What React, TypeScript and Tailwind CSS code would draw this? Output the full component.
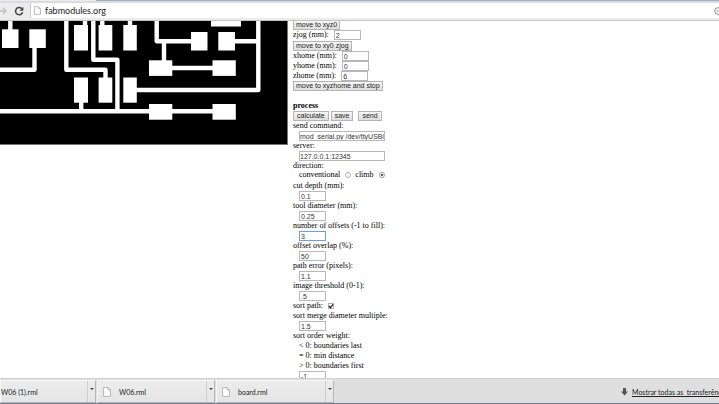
import { useState } from "react";
import type { ReactNode } from "react";

type FieldProps = { id: string; label: string; value: string; wide?: boolean };

function NumberBox({ id, value, wide = false }: { id: string; value: string; wide?: boolean }) {
  const [text, setText] = useState(value);
  return (
    <input
      id={id}
      type="text"
      value={text}
      onChange={(e) => setText(e.target.value)}
      className={`block h-[10px] border bg-white font-['Liberation_Sans',Arial,sans-serif] text-[7px] leading-[8px] text-[#333] outline-none ${
        wide ? "w-[86px]" : "w-[27px] pl-px"
      } ${id === "offsets" ? "border-[#6d9eeb]" : "border-[#b8b8b8]"}`}
    />
  );
}

function InlineField({ id, label, value }: FieldProps) {
  return (
    <div className="flex h-[10px] items-center gap-[5px]">
      <label htmlFor={id}>{label}</label>
      <NumberBox id={id} value={value} />
    </div>
  );
}

function StackedField({ id, label, value, wide }: FieldProps) {
  return (
    <div>
      <label htmlFor={id} className="block h-[10px]">
        {label}
      </label>
      <div className="pl-[6px]">
        <NumberBox id={id} value={value} wide={wide} />
      </div>
    </div>
  );
}

function PushButton({ children, roomy = false }: { children: ReactNode; roomy?: boolean }) {
  return (
    <button
      type="button"
      className={`block h-[10px] border border-[#b4b4b4] bg-linear-to-b from-[#f6f6f6] to-[#dedede] font-['Liberation_Sans',Arial,sans-serif] text-[7px] leading-[8px] text-[#222] ${
        roomy ? "px-[3px]" : "px-[2px]"
      }`}
    >
      {children}
    </button>
  );
}

function Radio({ id, checked, onPick }: { id: string; checked: boolean; onPick: () => void }) {
  return (
    <input
      id={id}
      type="radio"
      name="direction"
      checked={checked}
      onChange={onPick}
      className="size-[6px] appearance-none rounded-full border border-[#adadad] bg-[#eeeeee] bg-clip-content p-px checked:border-[#999] checked:bg-[#222]"
    />
  );
}

function Board() {
  const pads = [
    [2, 29.3, 16.5, 18.7],
    [29.3, 29.3, 16.5, 18.7],
    [74, 25, 14, 25.5],
    [98.6, 25, 13.7, 25.5],
    [123.3, 25, 13.5, 25.5],
    [74, 77.5, 14, 25.2],
    [98.6, 77.5, 13.7, 25.2],
    [123.3, 77.5, 13.5, 25.2],
    [191, 32, 16.5, 18.5],
    [218.3, 32, 16.7, 18.5],
    [211, 21, 30, 5.5],
    [149, 60.3, 23.3, 15.6],
    [212.5, 60.3, 23.3, 15.6],
    [149, 104, 23.3, 15.7],
    [212.5, 104, 23.3, 15.7],
  ];
  return (
    <svg
      viewBox="0 21 288 124"
      className="block h-[124px] w-[288px] shrink-0 bg-black"
      role="img"
      aria-label="board traces"
    >
      <g fill="#fff">
        {pads.map(([x, y, w, h]) => (
          <rect key={`${x}-${y}`} x={x} y={y} width={w} height={h} />
        ))}
      </g>
      <g fill="none" stroke="#fff" strokeWidth="4.4" strokeLinejoin="round">
        <path d="M10.3 21V30M34.5 47V69.7H0" />
        <path d="M66.3 21V69.7H105.5V79" />
        <path d="M85 21V26M102.3 21V26M130 21V26" />
        <path d="M93.3 21V59.8H117.4V111.3" />
        <path d="M81.2 102V111.3M0 111.3H213" />
        <path d="M136 90H258.3V21M235 41.3H258.3" />
        <path d="M156.7 21V41.3H191M164 41.3V61" />
        <path d="M172 68H213" />
      </g>
      <path d="M0 144.5H288M287.5 21V145" stroke="#777" fill="none" />
    </svg>
  );
}

function PageIcon({ className }: { className: string }) {
  return (
    <svg viewBox="0 0 8 10" className={className} aria-hidden="true">
      <path d="M.6.6H5L7.4 3V9.4H.6Z" fill="#fff" stroke="#a3a3a3" strokeWidth=".8" />
      <path d="M5 .6V3H7.4" fill="none" stroke="#a3a3a3" strokeWidth=".7" />
    </svg>
  );
}

function DownloadItem({ name, className, first = false }: { name: string; className: string; first?: boolean }) {
  return (
    <div
      className={`flex h-[23px] shrink-0 border border-t-[#f6f6f6] border-r-[#b5b5b5] border-b-[#b5b5b5] border-l-[#f6f6f6] bg-linear-to-b from-[#ececec] to-[#e5e5e5] ${className}`}
    >
      <button type="button" className={`flex min-w-0 flex-1 items-center ${first ? "" : "gap-[8px] pl-[5px]"}`}>
        {!first && <PageIcon className="h-[10px] w-[8px]" />}
        <span className="whitespace-nowrap">{name}</span>
      </button>
      <button
        type="button"
        aria-label={`Options for ${name}`}
        className="flex w-[8px] justify-center border-l border-[#cecece] pt-[7px]"
      >
        <svg viewBox="0 0 4 2" className="h-[2px] w-[4px]" aria-hidden="true">
          <path d="M0 0H4L2 2Z" fill="#444" />
        </svg>
      </button>
    </div>
  );
}

export default function App() {
  const [direction, setDirection] = useState("climb");
  const [sortPath, setSortPath] = useState(true);

  return (
    <div className="flex h-screen flex-col overflow-hidden bg-white">
      <header className="flex h-[21px] shrink-0 flex-col border-b border-[#c4c4c4] bg-[#ececec]">
        <div className="flex h-[3px] shrink-0 flex-col">
          <div className="ml-[96px] h-px bg-[#9daec0]" />
          <div className="h-[2px] bg-[#dddbe1]" />
        </div>
        <div className="flex h-[15px] items-center">
          <button type="button" aria-label="Forward" className="w-[7px] shrink-0">
            <svg viewBox="0 0 7 8" className="h-[8px] w-[7px]" aria-hidden="true">
              <path d="M0 4H6M3 1L6 4L3 7" fill="none" stroke="#bdbdbd" strokeWidth="1.3" />
            </svg>
          </button>
          <button type="button" aria-label="Reload" className="ml-[7px] w-[10px] shrink-0">
            <svg viewBox="0 0 10 10" className="size-[10px]" aria-hidden="true">
              <path d="M7.6 2.5A3.6 3.6 0 1 0 8.6 6.2" fill="none" stroke="#444" strokeWidth="1.5" />
              <path d="M9.4.7V4.7H5.4Z" fill="#444" />
            </svg>
          </button>
          <div className="ml-[6px] flex h-[15px] min-w-0 flex-1 items-center rounded-l-[2px] border-l border-[#c8c8c8] bg-white pl-[3px]">
            <PageIcon className="h-[9px] w-[7px] shrink-0" />
            <input
              type="text"
              aria-label="Address"
              defaultValue="fabmodules.org"
              className="ml-[4px] h-[13px] min-w-0 flex-1 bg-transparent font-[Lato,'Open_Sans',sans-serif] text-[9px] leading-[13px] text-[#222] outline-none"
            />
            <div className="w-[5px] shrink-0 overflow-hidden">
              <svg viewBox="0 0 8 8" className="size-[8px]" aria-hidden="true">
                <circle cx="4" cy="4" r="3.3" fill="none" stroke="#8c8c8c" />
                <path d="M2.5 4H8" stroke="#8c8c8c" />
              </svg>
            </div>
          </div>
        </div>
      </header>

      <main className="flex min-h-0 flex-1 items-start overflow-hidden">
        <Board />
        <form className="-mt-px min-w-0 flex-1 pl-[5px] font-['Liberation_Serif','Times_New_Roman',serif] text-[8px] leading-[10px] whitespace-nowrap text-black">
          <PushButton>move to xyz0</PushButton>
          <InlineField id="zjog" label="zjog (mm):" value="2" />
          <div className="pt-px">
            <PushButton>move to xy0 zjog</PushButton>
          </div>
          <InlineField id="xhome" label="xhome (mm):" value="0" />
          <InlineField id="yhome" label="yhome (mm):" value="0" />
          <InlineField id="zhome" label="zhome (mm):" value="6" />
          <PushButton>move to xyzhome and stop</PushButton>

          <h2 className="pt-[10px] font-bold">process</h2>
          <div className="flex">
            <PushButton roomy>calculate</PushButton>
            <div className="pr-[5px] pl-[2px]">
              <PushButton roomy>save</PushButton>
            </div>
            <PushButton roomy>send</PushButton>
          </div>
          <StackedField id="command" label="send command:" value="mod_serial.py /dev/ttyUSB0" wide />
          <StackedField id="server" label="server:" value="127.0.0.1:12345" wide />
          <fieldset>
            <legend className="block h-[9px]">direction:</legend>
            <div className="flex h-[11px] items-center pb-px pl-[6px]">
              <label htmlFor="conventional">conventional</label>
              <div className="flex pr-[4px] pl-[5px]">
                <Radio id="conventional" checked={direction === "conventional"} onPick={() => setDirection("conventional")} />
              </div>
              <label htmlFor="climb">climb</label>
              <div className="flex pl-[5px]">
                <Radio id="climb" checked={direction === "climb"} onPick={() => setDirection("climb")} />
              </div>
            </div>
          </fieldset>
          <StackedField id="depth" label="cut depth (mm):" value="0.1" />
          <StackedField id="diameter" label="tool diameter (mm):" value="0.25" />
          <StackedField id="offsets" label="number of offsets (-1 to fill):" value="3" />
          <StackedField id="overlap" label="offset overlap (%):" value="50" />
          <StackedField id="error" label="path error (pixels):" value="1.1" />
          <StackedField id="threshold" label="image threshold (0-1):" value=".5" />
          <div className="flex h-[10px] items-center gap-[5px]">
            <label htmlFor="sort">sort path:</label>
            <span className="relative flex">
              <input
                id="sort"
                type="checkbox"
                checked={sortPath}
                onChange={(e) => setSortPath(e.target.checked)}
                className="size-[6px] appearance-none border border-[#b0b0b0] bg-white"
              />
              {sortPath && (
                <svg viewBox="0 0 6 6" className="pointer-events-none absolute inset-0 size-[6px]" aria-hidden="true">
                  <path d="M1 3L2.5 4.7L5.2 1" fill="none" stroke="#222" strokeWidth="1.2" />
                </svg>
              )}
            </span>
          </div>
          <StackedField id="merge" label="sort merge diameter multiple:" value="1.5" />
          <label htmlFor="weight" className="block">
            sort order weight:
            <span className="block pl-[6px]">&lt; 0: boundaries last</span>
            <span className="block pl-[6px]">= 0: min distance</span>
            <span className="block pl-[6px]">&gt; 0: boundaries first</span>
          </label>
          <div className="pl-[6px]">
            <NumberBox id="weight" value="-1" />
          </div>
        </form>
      </main>

      <footer className="flex h-[26px] shrink-0 items-start border-t border-b border-t-[#d0d0d0] border-b-[#668295] bg-[#dfdfdf] pt-px font-[Lato,'Open_Sans',sans-serif] text-[7px] leading-[10px] text-[#222]">
        <DownloadItem name="W06 (1).rml" className="w-[96px]" first />
        <DownloadItem name="W06.rml" className="ml-px w-[118px]" />
        <DownloadItem name="board.rml" className="ml-px w-[118px]" />
        <div className="ml-auto flex h-[23px] w-[98px] shrink-0 items-center gap-[4px] overflow-hidden">
          <svg viewBox="0 0 7 8" className="h-[8px] w-[7px] shrink-0" aria-hidden="true">
            <path d="M2 0H5V3.5H7L3.5 7.5L0 3.5H2Z" fill="#555" />
          </svg>
          <a href="#downloads" className="whitespace-pre underline">
            {"Mostrar todas as  transferências"}
          </a>
        </div>
      </footer>
    </div>
  );
}
